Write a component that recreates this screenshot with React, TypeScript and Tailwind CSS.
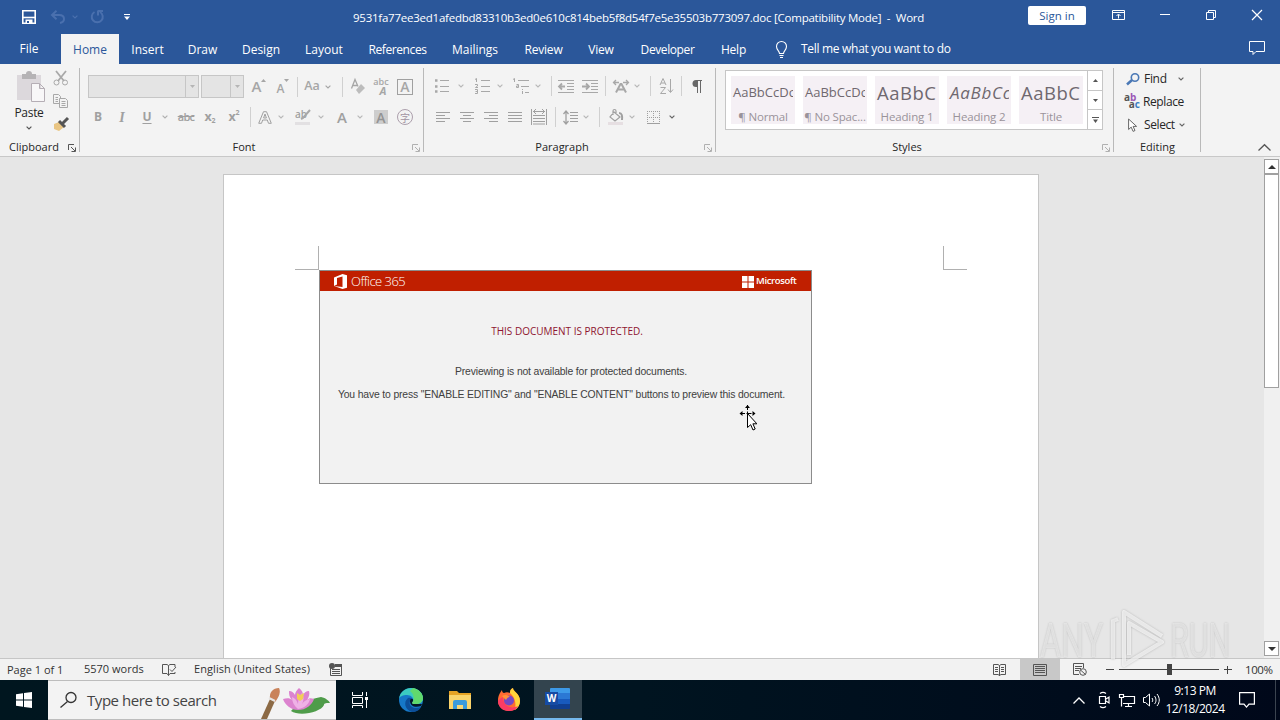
import React from "react";
import { clsx } from "clsx";

const UI = "font-['Open_Sans','Noto_Sans',sans-serif]";

type KidProps = { children?: React.ReactNode; className?: string };

function Icon({ w, h, className, children }: KidProps & { w: number; h: number }) {
  return (
    <svg
      width={w}
      height={h}
      viewBox={`0 0 ${w} ${h}`}
      fill="none"
      stroke="currentColor"
      className={clsx("shrink-0 overflow-visible", className)}
    >
      {children}
    </svg>
  );
}

function Cell({ className, children }: KidProps) {
  return <div className={clsx("flex shrink-0 items-center justify-center whitespace-nowrap", className)}>{children}</div>;
}

function Chevron({ className }: { className?: string }) {
  return (
    <Icon w={6} h={4} className={className}>
      <path d="M.6.6 3 2.9 5.4.6" strokeWidth="1.2" />
    </Icon>
  );
}

function Sep() {
  return <div className="h-5 w-px bg-[#d0d0d0]" />;
}

function Launcher({ className }: { className?: string }) {
  return (
    <Icon w={8} h={8} className={className}>
      <path d="M.5 6V.5H6M3 3l4 4M7.5 3.5v4h-4" />
    </Icon>
  );
}

function Group({ label, launcher, className, children }: KidProps & { label: string; launcher?: string }) {
  return (
    <div className={clsx("relative flex h-[92px] shrink-0 flex-col", className)}>
      <div className="flex-1">{children}</div>
      <div className="flex h-[17px] items-center text-[11px] text-[#262626]">
        <span className="flex-1 text-center">{label}</span>
        {launcher && (
          <span className={clsx(label === "Clipboard" ? "w-3" : "w-4 pl-1")}>
            <Launcher className={launcher} />
          </span>
        )}
      </div>
      <div className="absolute top-1 right-0 h-[84px] w-px bg-[#b9b9b9]" />
    </div>
  );
}

function TitleBar() {
  return (
    <div className="flex h-[34px] items-center text-white">
      <Icon w={14} h={14} className="ml-[22px]">
        <path d="M.8.8h12.4v12.4H.8z" strokeWidth="1.6" />
        <path d="M1 7.5h12" strokeWidth="1.6" />
        <path d="M3.5 9.5h7V13h-7z" fill="currentColor" stroke="none" />
        <path d="M5 11h2v2H5z" fill="#2b579a" stroke="none" />
      </Icon>
      <Icon w={14} h={14} className="ml-[15px] text-[#4a70ae]">
        <path d="M5.5.8 1 5l4.5 4.2M1.5 5H8c3 0 5 1.5 5 4 0 2-1.5 3.5-4 4" strokeWidth="2" />
      </Icon>
      <Chevron className="ml-[7px] text-[#4a70ae]" />
      <Icon w={14} h={14} className="ml-3 text-[#4a70ae]">
        <path d="M4.5 2A5.5 5.5 0 1 0 10 2M8 .5v5M8 1h5" strokeWidth="2" />
      </Icon>
      <Icon w={6} h={6} className="ml-[20px]">
        <path d="M0 .5h6" />
        <path d="M0 2.5h6L3 6z" fill="currentColor" stroke="none" />
      </Icon>
      <div className="ml-[223px] w-[675px] pt-0.5 text-[11.5px] tracking-[-0.24px] whitespace-pre">
        9531fa77ee3ed1afedbd83310b3ed0e610c814beb5f8d54f7e5e35503b773097.doc [Compatibility Mode]  -  Word
      </div>
      <div className="mb-1 flex h-[19px] w-[58px] items-center justify-center rounded-[2px] bg-white pt-0.5 text-[11.5px] text-[#2b579a]">
        Sign in
      </div>
      <Icon w={13} h={10} className="mb-1 ml-[26px]">
        <path d="M.5.5h12v9H.5zM.5 2.5h12M6.5 8.5v-4M4.5 6l2-2 2 2" />
      </Icon>
      <Icon w={10} h={10} className="mb-1 ml-[35px]">
        <path d="M0 4.5h10" />
      </Icon>
      <Icon w={10} h={10} className="mb-1 ml-[36px]">
        <path d="M.5 2.5h7v7h-7zM2.5 2.5V.5h7v7h-2" />
      </Icon>
      <Icon w={10} h={10} className="mb-1 ml-[36px]">
        <path d="m0 0 10 10M10 0 0 10" strokeWidth="1.2" />
      </Icon>
    </div>
  );
}

const tabs = [
  { name: "File", box: "w-[58px] mr-[3px]" },
  { name: "Home", box: "w-[58px] bg-[#f3f3f3] text-[#2b579a] pt-0.5" },
  { name: "Insert", box: "w-[57px] pt-0.5" },
  { name: "Draw", box: "w-[53px] pt-0.5" },
  { name: "Design", box: "w-[64px] pt-0.5" },
  { name: "Layout", box: "w-[62px] pt-0.5" },
  { name: "References", box: "w-[85px] pt-0.5 tracking-[-0.4px]" },
  { name: "Mailings", box: "w-[70px] pt-0.5" },
  { name: "Review", box: "w-[67px] pt-0.5 tracking-[-0.2px]" },
  { name: "View", box: "w-[48px] pt-0.5 tracking-[-0.2px]" },
  { name: "Developer", box: "w-[85px] pt-0.5 tracking-[-0.4px]" },
  { name: "Help", box: "w-[47px] pt-0.5 tracking-[-0.2px]" },
];

function Tabs() {
  return (
    <div className="flex h-[30px] items-center text-[12px] text-white">
      {tabs.map((t) => (
        <div key={t.name} className={clsx("flex h-[30px] shrink-0 items-center justify-center", t.box)}>
          {t.name}
        </div>
      ))}
      <Icon w={11} h={17} className="ml-[19px]">
        <path d="M3.5 12.5c0-2.500-3-3.500-3-7a5 5 0 0 1 10 0c0 3.500-3 4.500-3 7zM3.500 14.500h4M4 16.500h3" strokeWidth="1.1" />
      </Icon>
      <span className="ml-[14px] w-[440px] tracking-[-0.3px] whitespace-nowrap">Tell me what you want to do</span>
      <Icon w={16} h={14} className="mb-0.5 ml-[8px]">
        <path d="M.5.5h15v10H7l-3 3v-3H.5z" />
      </Icon>
    </div>
  );
}

function Clipboard() {
  return (
    <Group label="Clipboard" launcher="text-[#555]" className="w-[80px]">
      <div className="flex">
        <div className="ml-[14px] flex w-[30px] flex-col items-center pt-2 text-[12px] text-[#262626]">
          <Icon w={28} h={30} className="ml-[4px]">
            <path d="M0 3h24v25H0z" fill="#dcd8dc" stroke="none" />
            <path d="M5 2h4a3 3 0 0 1 6 0h4v5H5z" fill="#b5b3b5" stroke="none" />
            <path d="M14.500 11.500h8l5 5v13h-13zM22.500 11.500v5h5" fill="#f8f7f8" stroke="#b5aeb5" />
          </Icon>
          <span className="mt-[3px] leading-4 tracking-[-0.3px]">Paste</span>
          <Chevron className="mt-[5px] text-[#555]" />
        </div>
        <div className="ml-[9px] flex flex-col items-center pt-[7px] text-[#a8a8a8]">
          <Icon w={16} h={15}>
            <path d="m3 0 8 10M13 0 5 10" strokeWidth="1.8" />
            <circle cx="3.5" cy="11.5" r="2.5" />
            <circle cx="12" cy="11.5" r="2.5" />
          </Icon>
          <Icon w={16} h={14} className="mt-2">
            <path d="M6 9.500H.5v-9h5l2 2V4M2.500 3.500H5M2.500 5.500H5M2.500 7.500H5" />
            <path d="M6.500 4.500h6l2 2v7h-8zM8.500 7.500h4M8.500 9.500h4M8.500 11.500h4" />
          </Icon>
          <Icon w={16} h={14} className="mt-[9px]">
            <path d="m1 7 5-2 5 5-5 4-5-2z" fill="#e9c583" stroke="none" />
            <path d="m6 4 6 6M9.500 6.500 15 1" stroke="#555" strokeWidth="3" />
          </Icon>
        </div>
      </div>
    </Group>
  );
}

function Combo({ className }: { className: string }) {
  return (
    <div className={clsx("flex h-[23px] justify-end border border-[#c6c6c6] bg-[#e4e4e4]", className)}>
      <div className="flex w-[13px] items-center justify-center border-l border-[#c6c6c6]">
        <Icon w={5} h={3} className="text-[#b5b5b5]">
          <path d="M0 0h5L2.500 3z" fill="currentColor" stroke="none" />
        </Icon>
      </div>
    </div>
  );
}

function FontGroup() {
  return (
    <Group label="Font" launcher="text-[#b0b0b0]" className="w-[344px]">
      <div className="flex h-[34px] pt-[11px] pl-2 text-[#a6a6a6]">
        <Combo className="w-[111px]" />
        <Combo className="ml-0.5 w-[43px]" />
        <Cell className="ml-px w-[28px] text-[15px] font-semibold">
          A
          <Icon w={5} h={3} className="mb-3">
            <path d="M0 3h5L2.500 0z" fill="currentColor" stroke="none" />
          </Icon>
        </Cell>
        <Cell className="w-[20px] pt-1 text-[12px] font-semibold">
          A
          <Icon w={5} h={3} className="mb-4">
            <path d="M0 0h5L2.500 3z" fill="currentColor" stroke="none" />
          </Icon>
        </Cell>
        <Cell className="w-2"><Sep /></Cell>
        <Cell className="w-[22px] text-[12.500px] font-semibold">Aa</Cell>
        <Cell className="w-[10px]"><Chevron /></Cell>
        <Cell className="w-[18px]"><Sep /></Cell>
        <Cell className="w-[14px]">
          <Icon w={14} h={15}>
            <path d="M.5 9.500 4 .5l3 7M2 6.500h4" strokeWidth="1.3" />
            <path d="m5 11 5-6 4 4-6 6z" fill="#bcbcbc" stroke="none" />
          </Icon>
        </Cell>
        <Cell className="w-[32px] flex-col text-[9px] leading-[8px] font-semibold">
          <span>abc</span>
          <span className="pl-1 text-[11px] leading-[9px] font-bold italic">A</span>
        </Cell>
        <Cell className="w-4">
          <span className="flex h-4 w-4 items-center justify-center border border-[#a0a0a0] text-[14px] font-semibold">A</span>
        </Cell>
      </div>
      <div className="mt-2 flex h-[22px] pl-2.5 text-[12px] text-[#a0a0a0]">
        <Cell className="w-4 text-[12px] font-bold">B</Cell>
        <Cell className="w-8 font-['Liberation_Serif',serif] text-[14px] font-bold italic">I</Cell>
        <Cell className="w-[18px] text-[12px] font-bold underline underline-offset-2">U</Cell>
        <Cell className="w-[18px]"><Chevron className="text-[#b0b0b0]" /></Cell>
        <Cell className="w-6 text-[11px] font-semibold tracking-[-0.7px] line-through">abc</Cell>
        <Cell className="w-6 text-[12.500px] font-bold">
          x<span className="mt-2 text-[7px]">2</span>
        </Cell>
        <Cell className="w-6 text-[12.500px] font-bold">
          x<span className="mb-2 text-[7px]">2</span>
        </Cell>
        <Cell className="w-2"><Sep /></Cell>
        <Cell className="w-[22px]">
          <Icon w={14} h={13}>
            <path d="M.7 12.300 5.500.7h3l4.800 11.600h-2.800L9.300 9H4.700l-1.200 3.300zM5.600 7h2.800L7 3z" />
          </Icon>
        </Cell>
        <Cell className="w-[10px]"><Chevron className="text-[#b8b8b8]" /></Cell>
        <Cell className="ml-2 w-[18px]">
          <div className="relative h-4 w-4 text-[10px] leading-[10px] font-semibold">
            ab
            <svg viewBox="0 0 16 16" className="absolute inset-0 h-4 w-4">
              <path d="M15 1 8 9l-2 1" stroke="#a8a8a8" strokeWidth="2" fill="none" />
              <path d="M0 13h15v3H0z" fill="#e2e0e2" />
            </svg>
          </div>
        </Cell>
        <Cell className="w-[18px]"><Chevron className="text-[#b8b8b8]" /></Cell>
        <Cell className="w-[24px] text-[15px] font-semibold">A</Cell>
        <Cell className="ml-0.5 w-2"><Chevron className="text-[#b8b8b8]" /></Cell>
        <Cell className="ml-1.5 w-[22px]">
          <span className="flex h-[14px] w-[14px] items-center justify-center bg-[#cdcdcd] text-[14px] font-semibold text-[#939393]">A</span>
        </Cell>
        <Cell className="w-[26px]">
          <span className="flex h-4 w-4 items-center justify-center rounded-full border border-[#ac9fac] font-['Noto_Sans_CJK_SC',sans-serif] text-[10px] text-[#a294a2]">
            字
          </span>
        </Cell>
      </div>
    </Group>
  );
}

const alignments = [
  "M0 .5h14M0 3.5h9M0 6.5h14M0 9.5h9",
  "M0 .5h14M3 3.5h8M0 6.5h14M3 9.5h8",
  "M0 .5h14M5 3.5h9M0 6.5h14M5 9.5h9",
  "M0 .5h14M0 3.5h14M0 6.5h14M0 9.5h14",
];

function ParagraphGroup() {
  return (
    <Group label="Paragraph" launcher="text-[#b0b0b0]" className="w-[292px]">
      <div className="flex h-[34px] pt-[10px] pl-2 text-[#a8a8a8]">
        <Cell className="w-5">
          <Icon w={14} h={14}>
            <path d="M5 1.5h9M5 7.5h9M5 12.5h9" />
            <path d="M0 1.5h2.500M0 7.5h2.500M0 12.5h2.500" strokeWidth="2.5" />
          </Icon>
        </Cell>
        <Cell className="w-[18px]"><Chevron className="text-[#b8b8b8]" /></Cell>
        <Cell className="w-6">
          <Icon w={15} h={16}>
            <path d="M6 2.5h9M6 8.5h9M6 13.5h9" />
            <path d="M0 1.5 1.5.5V4M0 6.5h2.500v1.500L.5 9.500H3M0 11.500h2.500v4H0M.5 13.500h2" />
          </Icon>
        </Cell>
        <Cell className="w-3"><Chevron className="text-[#b8b8b8]" /></Cell>
        <Cell className="w-[30px]">
          <Icon w={17} h={17}>
            <path d="M5 2.5h11M8 8.5h8M12 14.5h4M0 1.5 1.5.5V4M3.500 6.500h2v3h-2V8h2M9.500 11v1M9.500 13v3" />
          </Icon>
        </Cell>
        <Cell className="w-1"><Chevron className="text-[#b8b8b8]" /></Cell>
        <Cell className="ml-1.5 w-2.5"><Sep /></Cell>
        <Cell className="w-5">
          <Icon w={16} h={13}>
            <path d="M0 .5h16M9 3.5h7M9 6.5h7M9 9.5h7M0 12.5h16" />
            <path d="M7 6.5H1M4 3.5l-3 3 3 3" strokeWidth="1.8" />
          </Icon>
        </Cell>
        <Cell className="ml-1 w-5">
          <Icon w={16} h={13}>
            <path d="M0 .5h16M9 3.5h7M9 6.5h7M9 9.5h7M0 12.5h16" />
            <path d="M0 6.5h6M4 3.5l3 3-3 3" strokeWidth="1.8" />
          </Icon>
        </Cell>
        <Cell className="w-2.5"><Sep /></Cell>
        <Cell className="w-[22px]">
          <Icon w={16} h={13}>
            <path d="M3 12.5 7.500 4h1l4.500 8.500M5 9.500h6" strokeWidth="2" />
            <path d="M6 2.5H.5M3 0 .5 2.500 3 5M10 2.500h5.500M13 0l2.500 2.500L13 5" strokeWidth="1.3" />
          </Icon>
        </Cell>
        <Cell className="w-2.5"><Chevron className="text-[#b8b8b8]" /></Cell>
        <Cell className="ml-[3px] w-2.5"><Sep /></Cell>
        <Cell className="w-[22px]">
          <Icon w={14} h={17}>
            <path d="M1 7 4 .5 7 7M2 5h4M1.500 9.500h5l-5 6h5.500M11.500 1v13M9 11.500l2.500 3 2.500-3" />
          </Icon>
        </Cell>
        <Cell className="w-2"><Sep /></Cell>
        <Cell className="w-6">
          <Icon w={10} h={13} className="text-[#686868]">
            <path d="M5 .5h5M5.500 0v13M8.500 0v13" />
            <path d="M5 0v7H4a3.500 3.500 0 0 1 0-7z" fill="currentColor" stroke="none" />
          </Icon>
        </Cell>
      </div>
      <div className="mt-2 flex h-[22px] pl-[7px] text-[#a0a0a0]">
        {alignments.map((d) => (
          <Cell key={d} className="w-6">
            <Icon w={14} h={10}>
              <path d={d} />
            </Icon>
          </Cell>
        ))}
        <Cell className="w-6">
          <Icon w={16} h={16}>
            <path d="M.5 0v16M15.500 0v16M2 6.500h12M2 9.500h12M2 12.500h12M2 15h12M2 2.500h12M5 0 2.500 2.500 5 5M11 0l2.500 2.500L11 5" />
          </Icon>
        </Cell>
        <Cell className="w-2"><Sep /></Cell>
        <Cell className="w-[22px]">
          <Icon w={15} h={15}>
            <path d="M7 2.500h8M7 5.500h8M7 8.500h8M7 11.500h8" />
            <path d="M3 1v13M.5 4 3 1l2.500 3M.5 11 3 14l2.500-3" strokeWidth="1.3" />
          </Icon>
        </Cell>
        <Cell className="w-2.5"><Chevron className="text-[#b8b8b8]" /></Cell>
        <Cell className="ml-[3px] w-2.5"><Sep /></Cell>
        <Cell className="w-[22px]">
          <Icon w={15} h={16}>
            <path d="M0 13h15v3H0z" fill="#e6dfe2" stroke="none" />
            <path d="m6 3 6 5-5 4-5-4zM5 6V2c0-2 3-2 3 0v3" strokeWidth="1.2" />
            <path d="M11 4c3 0 3.500 3 3 7" strokeWidth="2" />
          </Icon>
        </Cell>
        <Cell className="w-3"><Chevron className="text-[#b8b8b8]" /></Cell>
        <Cell className="ml-0.5 w-[26px]">
          <Icon w={13} h={13}>
            <path d="M.5 0v12M6.500 0v12M12.500 0v12M0 .5h13M0 6.500h13" strokeDasharray="1 1" />
            <path d="M0 12.500h13" />
          </Icon>
        </Cell>
        <Cell className="w-3"><Chevron className="text-[#666]" /></Cell>
      </div>
    </Group>
  );
}

const styleTiles = [
  { name: "¶ Normal", sample: "AaBbCcDc", cls: "text-[13px] pl-[2px]" },
  { name: "¶ No Spac...", sample: "AaBbCcDc", cls: "text-[13px] pl-[2px]" },
  { name: "Heading 1", sample: "AaBbC", cls: "text-[18.5px] pl-[2px] tracking-[0.5px]" },
  { name: "Heading 2", sample: "AaBbCc", cls: "text-[17px] pl-[3px] italic tracking-[0.7px]" },
  { name: "Title", sample: "AaBbC", cls: "text-[18.5px] pl-[2px] tracking-[0.5px]" },
];

function StylesGroup() {
  return (
    <Group label="Styles" launcher="text-[#b0b0b0]" className="w-[398px]">
      <div className="mt-[6px] ml-[9px] flex h-[60px] w-[378px] border border-[#c6c6c6] bg-white">
        <div className="flex gap-2 pt-[5px] pl-[5px]">
          {styleTiles.map((s) => (
            <div key={s.name} className="h-[48px] w-[64px] bg-[#f5f0f5]">
              <div className={clsx("h-[33px] w-[62px] overflow-hidden leading-[33px] whitespace-nowrap text-[#6f686f]", s.cls)}>
                {s.sample}
              </div>
              <div className="text-center text-[11.5px] leading-[16px] tracking-[-0.15px] whitespace-nowrap text-[#9a939a]">
                {s.name}
              </div>
            </div>
          ))}
        </div>
        <div className="ml-auto flex w-[15px] flex-col border-l border-[#c6c6c6] text-[#555]">
          <Cell className="h-5 border-b border-[#c6c6c6]">
            <Icon w={5} h={3}><path d="M0 3h5L2.500 0z" fill="currentColor" stroke="none" /></Icon>
          </Cell>
          <Cell className="h-[19px] border-b border-[#c6c6c6]">
            <Icon w={5} h={3}><path d="M0 0h5L2.500 3z" fill="currentColor" stroke="none" /></Icon>
          </Cell>
          <Cell className="flex-1">
            <Icon w={7} h={6}>
              <path d="M0 .5h7" />
              <path d="M1 2.500h5L3.500 6z" fill="currentColor" stroke="none" />
            </Icon>
          </Cell>
        </div>
      </div>
    </Group>
  );
}

function EditingGroup() {
  return (
    <Group label="Editing" className="w-[87px]">
      <div className="flex flex-col pt-[3px] pl-[10px] text-[12px] text-[#262626]">
        <div className="flex h-[23px] items-center">
          <Icon w={14} h={12} className="ml-0.5">
            <circle cx="9" cy="4.500" r="3.700" stroke="#4a78b5" strokeWidth="1.6" />
            <path d="M6 7 1 11.500" stroke="#4a78b5" strokeWidth="2.5" />
          </Icon>
          <span className="ml-[4px] w-[24px] tracking-[-0.3px]">Find</span>
          <Chevron className="ml-2.5 text-[#666]" />
        </div>
        <div className="flex h-[23px] items-center">
          <div className="h-[15px] w-4 text-[10px] leading-[7px] font-bold text-[#555]">
            a<span className="text-[#9b59b6]">b</span>
            <div className="flex justify-end">
              a<span className="text-[#3b7fc4]">c</span>
            </div>
          </div>
          <span className="ml-[3px] tracking-[-0.4px]">Replace</span>
        </div>
        <div className="flex h-[23px] items-center">
          <Icon w={9} h={14} className="ml-1 text-[#666]">
            <path d="M.6 1v10.500l2.600-2.400 1.900 4.300 1.900-.9-1.900-4.100h3.500z" fill="#fff" />
          </Icon>
          <span className="ml-[7px] w-[32px] tracking-[-0.4px]">Select</span>
          <Chevron className="ml-[3px] text-[#666]" />
        </div>
      </div>
    </Group>
  );
}

function Ribbon() {
  return (
    <div className="flex h-[93px] border-b border-[#c8c8c8] bg-[#f3f3f3]">
      <Clipboard />
      <FontGroup />
      <ParagraphGroup />
      <StylesGroup />
      <EditingGroup />
      <Icon w={13} h={7} className="mt-[80px] ml-[57px] text-[#555]">
        <path d="M.5 6.500 6.500.7l6 5.800" strokeWidth="1.3" />
      </Icon>
    </div>
  );
}

function ProtectedBanner() {
  return (
    <div className="absolute top-[95px] left-[95px] h-[214px] w-[493px] border border-[#8c8c8c] bg-[#f2f2f2]">
      <div className="flex h-[20px] items-center bg-[#c01f00] text-white">
        <Icon w={13} h={15} className="ml-[14px]">
          <path d="M0 3.500 8.500 0 13 1.300v12.400L8.500 15 0 12l8.500 1V2.500L3 4v6.500L0 12z" fill="currentColor" stroke="none" />
        </Icon>
        <span className="ml-[4px] pt-px text-[13px] leading-[19px] font-light tracking-[-0.55px]">Office 365</span>
        <Icon w={12} h={12} className="mt-px ml-auto">
          <path d="M0 0h5.500v5.500H0zM6.500 0H12v5.500H6.500zM0 6.500h5.500V12H0zM6.500 6.500H12V12H6.500z" fill="currentColor" stroke="none" />
        </Icon>
        <span className="mr-[14px] ml-[2px] w-[41px] pt-px text-[9.5px] font-semibold tracking-[-0.35px]">Microsoft</span>
      </div>
      <div className="pt-[32px] pl-[3px] text-center text-[10px] leading-4 text-[#8e1530]">
        THIS DOCUMENT IS PROTECTED.
      </div>
      <div className="pt-[25px] pl-[11px] text-center font-['Liberation_Sans',Arial,sans-serif] text-[10.4px] leading-4 tracking-[-0.16px] text-[#404040]">
        Previewing is not available for protected documents.
      </div>
      <div className="pt-[7px] pr-[8px] text-center font-['Liberation_Sans',Arial,sans-serif] text-[10.4px] leading-4 tracking-[-0.16px] whitespace-nowrap text-[#404040]">
        You have to press "ENABLE EDITING" and "ENABLE CONTENT" buttons to preview this document.
      </div>
      {/* move pointer */}
      <svg width="18" height="28" viewBox="0 0 18 28" className="absolute top-[133px] left-[419px]">
        <path d="M8.500 1v17M1 9.500h15" stroke="#000" strokeDasharray="5 1.500" />
        <path d="M6 4h5L8.500 1zM3.500 7v5L.5 9.500zM13.500 7v5l3-2.500z" />
        <path d="M8.500 9.500v14l3.200-2.800 2.300 5.300 2.200-1-2.300-5.200h4z" fill="#fff" stroke="#000" />
      </svg>
    </div>
  );
}

function ScrollButton({ d }: { d: string }) {
  return (
    <div className="flex h-[15px] w-[15px] items-center justify-center border border-[#a0a0a0] bg-white">
      <Icon w={8} h={4}>
        <path d={d} fill="#333" stroke="none" />
      </Icon>
    </div>
  );
}

function DocumentArea() {
  return (
    <div className="flex h-[501px] bg-[#e6e6e6]">
      <div className="flex flex-1 justify-center pt-[17px] pr-[2px]">
        <div className="relative h-[484px] w-[816px] border-x border-t border-[#c6c6c6] bg-white">
          <div className="absolute top-[71px] left-[71px] h-6 w-6 border-r border-b border-[#b0b0b0]" />
          <div className="absolute top-[71px] left-[719px] h-6 w-6 border-b border-l border-[#b0b0b0]" />
          <ProtectedBanner />
        </div>
      </div>
      <div className="flex w-4 flex-col bg-[#f0f0f0] pt-0.5 pb-0.5">
        <ScrollButton d="M0 4h8L4 0z" />
        <div className="h-[214px] w-[15px] border border-[#a0a0a0] bg-white" />
        <div className="flex-1" />
        <ScrollButton d="M0 0h8L4 4z" />
      </div>
    </div>
  );
}

function StatusBar() {
  return (
    <div className="flex h-[22px] items-center border-t border-[#c6c6c6] bg-[#f2f2f2] text-[11px] text-[#333]">
      <span className="ml-[7px] w-[77px] pt-px">Page 1 of 1</span>
      <span className="w-[78px]">5570 words</span>
      <Icon w={14} h={13} className="text-[#555]">
        <path d="M6.500 12.500 5 10.500H.5v-9H5l1.500 1 1.500-1h5V4M6.500 2.500v10M6.500 12.500 8 10.500h5V9M8 6.500l2 2 4-4.500" />
      </Icon>
      <span className="ml-[18px] w-[135px] tracking-[0.07px] whitespace-nowrap">English (United States)</span>
      <Icon w={13} h={13} className="text-[#555]">
        <path d="M1.500 5v7.500h11v-9H6M3 6.500h8M3 8.500h8M3 10.500h8" />
        <path d="M6 2.500h7" strokeWidth="3" />
        <circle cx="3" cy="3" r="3" fill="currentColor" stroke="none" />
      </Icon>
      <Icon w={13} h={12} className="ml-[651px] text-[#555]">
        <path d="M6.500 12V1.500L5 .5H.5v10H5l1.500 1 1.500-1h4.500V.5H8l-1.500 1M2 3.500h3M2 5.500h3M2 7.500h3M8 3.500h3M8 5.500h3M8 7.500h3" />
      </Icon>
      <Cell className="ml-[14px] h-[21px] w-10 bg-[#c8c8c8] text-[#555]">
        <Icon w={14} h={12}>
          <path d="M.5.5h13v11H.5zM2 2.500h10M2 4.500h10M2 6.500h10M2 8.500h10" />
        </Icon>
      </Cell>
      <Icon w={14} h={13} className="ml-[13px] text-[#555]">
        <path d="M6 11.500H.5V.5h10V5M2 3.500h7M2 5.500h6M2 7.500h4" />
        <circle cx="10" cy="9" r="3.300" />
        <path d="m7.500 7 5 4.500" />
      </Icon>
      <div className="mb-px ml-[19px] h-px w-2 bg-[#444]" />
      <div className="relative ml-[5px] flex h-3 w-[100px] items-center">
        <div className="h-px w-full bg-[#444]" />
        <div className="absolute top-0 left-[48px] h-[11px] w-[5px] bg-[#444]" />
      </div>
      <Icon w={8} h={8} className="ml-[5px] text-[#444]">
        <path d="M0 3.500h8M3.500 0v8" />
      </Icon>
      <span className="ml-[13px] text-[11.5px] tracking-[-0.4px]">100%</span>
    </div>
  );
}

function Lily() {
  return (
    <svg width="76" height="38" viewBox="0 0 76 38">
      <path d="m1 38 9-20 5 2-8 18z" fill="#8c6a45" />
      <path d="M10 18C9 11 13 7 19 7c2 4 0 9-4 14z" fill="#c9825a" />
      <path d="m9 17 6 3" stroke="#e5e5e5" strokeWidth="2" fill="none" />
      <path d="M31 30c4-5 18-12 30-14 5 1 8 4 9 6-3 0-6 0-6 2-3 7-24 12-33 6z" fill="#4f9c4a" />
      <path d="M38 29c-7 0-13-5-15-11 4-1 7-1 9 1-3-3-3-6-3-9 3 0 5 2 6 4 0-3 2-5 4-7 3 2 4 5 4 7 1-2 3-4 6-4 1 3 0 6-2 9 2-2 4-2 7-1-2 6-8 11-16 11z" fill="#dc83cf" />
      <path d="M38 28c-4-3-6-7-6-12 4 2 5 4 6 7 0-4 1-7 4-11 2 4 2 7 0 11 2-3 4-4 8-5-1 5-5 9-12 10z" fill="#efb1e6" />
      <path d="m37 18 0-6 3 2 4-2-1 6-3 2z" fill="#f2ce56" />
    </svg>
  );
}

function EdgeIcon() {
  return (
    <svg width="24" height="24" viewBox="0 0 24 24">
      <circle cx="12" cy="12" r="12" fill="#1678c7" />
      <path d="M0 11C1 4 6 0 12 0c8 0 12 6 12 10 0 5-5 7-9 6-3 0-2-2-1-3 1-3-2-6-6-6-4 0-7 1-8 4z" fill="#3bcbc0" />
      <path d="M14 0c6 1 10 6 10 10 0 5-5 7-9 6-3 0-2-2-1-3 2-3 0-8-3-10z" fill="#61d96d" />
      <path d="M9 10c-5 4-3 12 4 14 4 0 8-2 9-5-7 3-13-1-11-6 0-2 3-2 3 0 0-2-2-4-5-3z" fill="#0c4f99" />
      <path d="M11 13c0-3 4-3 3 0-1 1-2 3 1 3h8l-1 2c-6 2-11 0-11-5z" fill="#04172a" />
    </svg>
  );
}

function ExplorerIcon() {
  return (
    <svg width="22" height="20" viewBox="0 0 22 20">
      <path d="M0 1h8l2 2h12v16H0z" fill="#e6a324" />
      <path d="M0 5h22v14H0z" fill="#fad46b" />
      <path d="M4 19v-7q0-2 2-2h10q2 0 2 2v7h-4v-4H8v4z" fill="#3b9bdc" />
      <path d="M8 15h6v4H8z" fill="#f8d777" />
    </svg>
  );
}

function FirefoxIcon() {
  return (
    <svg width="24" height="24" viewBox="0 0 24 24">
      <path d="M1 13C1 7 3 5 5 2c0 2 1 3 2 3 2-1 4-1 6 0 0-3 1-4 3-5 0 4 7 5 7 13 0 6-5 10-11 10S1 19 1 13z" fill="#ff6b32" />
      <path d="M16 0c0 4 7 5 7 13 0 4-2 7-5 9 1-5 1-12-5-17 0-3 1-4 3-5z" fill="#ffd43b" />
      <path d="M1 13c0 6 5 10 11 10 4 0 8-2 9-5-8 4-15-1-15-9-2 1-4 2-5 4z" fill="#fb3b65" />
      <circle cx="12" cy="12.500" r="5" fill="#7548c4" />
      <path d="M5 8c3-2 6-1 8 1-2 0-3 1-4 3z" fill="#ff9338" />
    </svg>
  );
}

function WordIcon() {
  return (
    <div className="relative h-[22px] w-[24px]">
      <div className="ml-[4px] flex h-[21px] flex-col overflow-hidden rounded-[1px]">
        <div className="flex-1 bg-[#3d9ae8]" />
        <div className="flex-1 bg-[#2b78d4]" />
        <div className="flex-1 bg-[#185abd]" />
        <div className="flex-1 bg-[#103f91]" />
      </div>
      <div className="absolute top-[4px] -left-[1px] flex h-[13px] w-[13px] items-center justify-center bg-[#164ba3] text-[10px] font-bold text-white">
        W
      </div>
    </div>
  );
}

function Taskbar() {
  return (
    <div className="flex h-10 bg-linear-to-r from-[#00161f] via-[#001420] to-[#00081a] text-white">
      <Cell className="w-12">
        <Icon w={16} h={16}>
          <path d="M0 2.300 7 1.200v6.300H0zM8 1.100 16 0v7.500H8zM0 8.500h7v6.300l-7-1zM8 8.500h8V16l-8-1.100z" fill="currentColor" stroke="none" />
        </Icon>
      </Cell>
      <div className="flex h-[40px] w-[288px] items-center border-y border-[#bdbdbd] bg-[#f3f3f3] text-[#333]">
        <Icon w={17} h={16} className="ml-[12px]">
          <circle cx="11" cy="5.500" r="5" strokeWidth="1.3" />
          <path d="M7.500 9.500.5 15.500" strokeWidth="1.3" />
        </Icon>
        <span className="ml-[10px] w-[130px] text-[15px] tracking-[-0.45px] whitespace-nowrap text-[#444]">Type here to search</span>
        <div className="ml-auto">
          <Lily />
        </div>
      </div>
      <Cell className="w-[49px]">
        <Icon w={17} h={16}>
          <path d="M.5 0v3.500h10V0M.5 5.500h10v6H.5zM.5 16v-2.500h10V16M14.500 0v4M14.500 8v8" />
          <path d="M13 5h3v3h-3z" fill="currentColor" stroke="none" />
        </Icon>
      </Cell>
      <Cell className="w-[51px]"><EdgeIcon /></Cell>
      <Cell className="w-[48px]"><ExplorerIcon /></Cell>
      <Cell className="w-[49px]"><FirefoxIcon /></Cell>
      <Cell className="ml-px w-[48px] border-b-2 border-[#76b9ed] bg-[#33444e]">
        <WordIcon />
      </Cell>
      <div className="ml-auto flex items-center">
        <Icon w={12} h={7}>
          <path d="M.5 6.500 6 1l5.500 5.500" strokeWidth="1.3" />
        </Icon>
        <Icon w={12} h={16} className="ml-[13px]">
          <path d="M1.500 4.500h6v7h-6zM8 7l3-2v6L8 9M2 1.500c2-1.500 4-1.500 6 0M2 14.500c2 1.500 4 1.500 6 0" strokeWidth="1.2" />
        </Icon>
        <Icon w={16} h={14} className="ml-[9px]">
          <path d="M5 3.500h10.500v7H4M9.500 11v2.500M6 13.500h7M.5 1.500h4v3h-4zM2.500 5v8.500" strokeWidth="1.2" />
        </Icon>
        <Icon w={17} h={14} className="ml-[8px]">
          <path d="M.5 4.500h2L6.500 1v12L2.500 9.500h-2zM9 5c1 1.500 1 3 0 4M11.500 3c2 2.500 2 6 0 8M14 1c3 4 3 8 0 12" />
        </Icon>
        <div className="ml-[5px] w-[60px] text-center text-[12px] leading-[18px] tracking-[-0.45px]">
          <div>9:13 PM</div>
          <div>12/18/2024</div>
        </div>
        <Icon w={16} h={16} className="mr-[20px] ml-[14px]">
          <path d="M.6.6h14.800v11.500H10l-2.500 3-2.500-3H.6z" strokeWidth="1.2" />
        </Icon>
        <div className="mr-[4px] h-10 w-px bg-[#3b4450]" />
      </div>
    </div>
  );
}

function Watermark() {
  const word =
    "inline-block origin-left font-['Roboto',sans-serif] text-[49px] leading-[50px] font-normal text-white/55 [text-shadow:0_0_2px_rgba(120,120,120,0.45)]";
  return (
    <div className="pointer-events-none absolute top-[609px] left-[1040px] flex h-[64px] w-[196px] items-center">
      <div className="w-[68px] shrink-0">
        <span className={clsx(word, "scale-x-[0.66]")}>ANY</span>
      </div>
      <svg width="58" height="64" viewBox="0 0 58 64" fill="none" className="shrink-0 drop-shadow-[0_0_1px_rgba(110,110,110,0.6)]">
        <path d="M5 50V12l5-2" stroke="#fff" strokeOpacity=".6" strokeWidth="4" />
        <path d="m54 27-38-24v53l38-23-33-19v32" stroke="#fff" strokeOpacity=".65" strokeWidth="4" strokeLinejoin="round" />
      </svg>
      <div className="ml-1 w-[62px] shrink-0">
        <span className={clsx(word, "scale-x-[0.62]")}>RUN</span>
      </div>
    </div>
  );
}

export default function App() {
  return (
    <div className={clsx("relative flex h-[720px] w-[1280px] flex-col overflow-hidden", UI)}>
      <div className="bg-[#2b579a]">
        <TitleBar />
        <Tabs />
      </div>
      <Ribbon />
      <DocumentArea />
      <StatusBar />
      <Taskbar />
      <Watermark />
    </div>
  );
}
